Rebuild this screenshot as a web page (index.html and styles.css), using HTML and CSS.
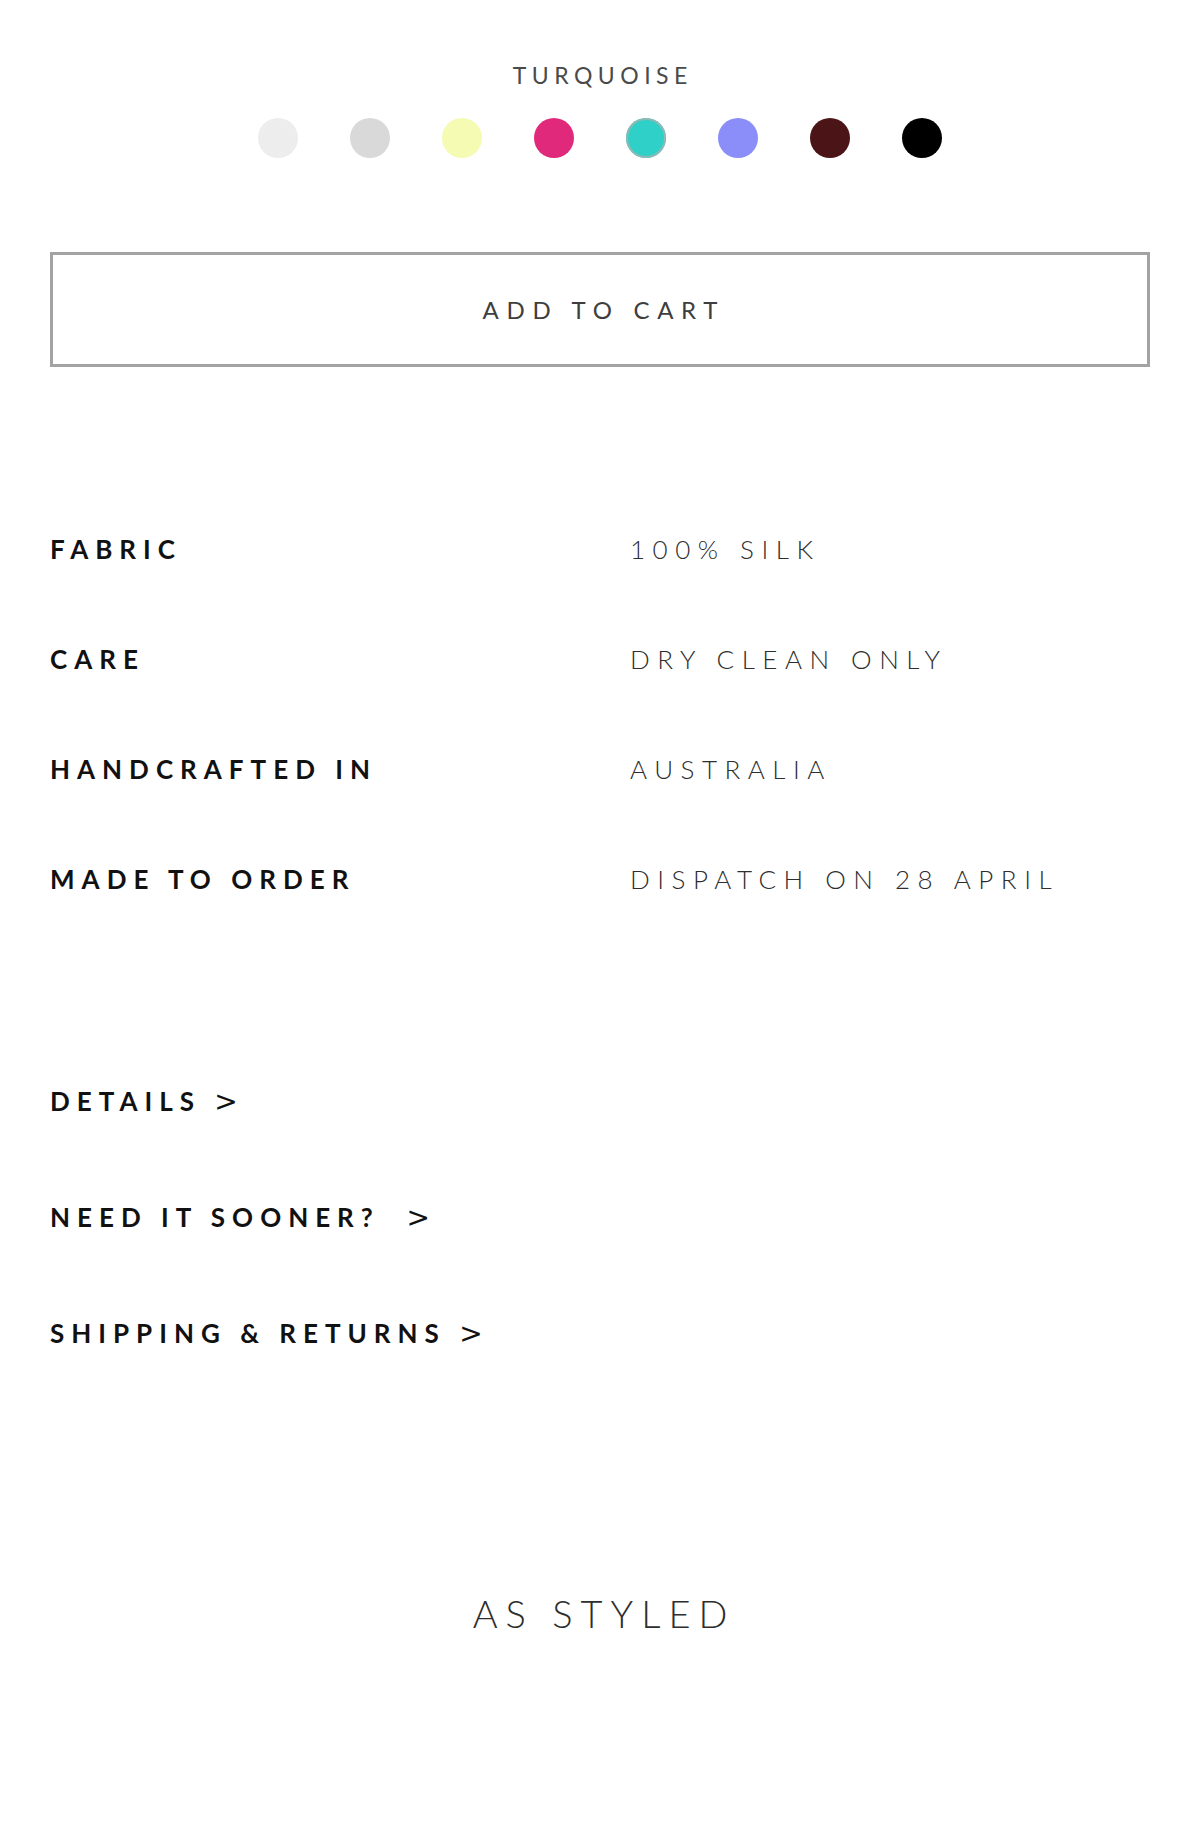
FILE: index.html
```html
<!DOCTYPE html>
<html lang="en">
<head>
<meta charset="utf-8">
<title>Product</title>
<link rel="stylesheet" href="styles.css">
</head>
<body>
<main class="product">
  <p class="color-name">TURQUOISE</p>
  <ul class="swatches">
    <li class="swatch swatch-white"></li>
    <li class="swatch swatch-grey"></li>
    <li class="swatch swatch-lemon"></li>
    <li class="swatch swatch-pink"></li>
    <li class="swatch swatch-turquoise is-selected"></li>
    <li class="swatch swatch-lilac"></li>
    <li class="swatch swatch-wine"></li>
    <li class="swatch swatch-black"></li>
  </ul>
  <button class="add-to-cart" type="button">ADD TO CART</button>

  <dl class="specs">
    <dt class="spec-label">FABRIC</dt><dd class="spec-value">100% SILK</dd>
    <dt class="spec-label">CARE</dt><dd class="spec-value">DRY CLEAN ONLY</dd>
    <dt class="spec-label">HANDCRAFTED IN</dt><dd class="spec-value">AUSTRALIA</dd>
    <dt class="spec-label">MADE TO ORDER</dt><dd class="spec-value">DISPATCH ON 28 APRIL</dd>
  </dl>

  <ul class="links">
    <li class="link">DETAILS <span class="arrow">&gt;</span></li>
    <li class="link">NEED IT SOONER?  <span class="arrow">&gt;</span></li>
    <li class="link">SHIPPING &amp; RETURNS <span class="arrow">&gt;</span></li>
  </ul>

  <h2 class="styled-title">AS STYLED</h2>
</main>
</body>
</html>
```

FILE: styles.css
```css
html, body {
  margin: 0;
  padding: 0;
  background: #ffffff;
}

body {
  font-family: "Lato", "Open Sans", "Liberation Sans", sans-serif;
  color: #111;
}

.product {
  padding: 60px 50px 196px;
}

.color-name {
  margin: 0;
  height: 30px;
  line-height: 30px;
  text-align: center;
  font-size: 23px;
  font-weight: 400;
  letter-spacing: 5.5px;
  padding-left: 5.5px;
  color: #4a4a4a;
}

.swatches {
  list-style: none;
  margin: 28px 0 0;
  padding: 0;
  display: flex;
  justify-content: center;
  gap: 52px;
}

.swatch {
  width: 40px;
  height: 40px;
  border-radius: 50%;
  box-sizing: border-box;
}

.swatch-white { background: #ededed; }
.swatch-grey { background: #d9d9d9; }
.swatch-lemon { background: #f5fbb3; }
.swatch-pink { background: #e1297b; }
.swatch-turquoise { background: #2fd0c7; }
.swatch-lilac { background: #8b8ef8; }
.swatch-wine { background: #4b1517; }
.swatch-black { background: #000; }

.swatch.is-selected {
  box-shadow: inset 0 0 0 2px #8fb9b6;
}

.add-to-cart {
  display: block;
  width: 100%;
  height: 115px;
  margin: 94px 0 0;
  box-sizing: border-box;
  border: 3px solid #a3a3a3;
  background: #fff;
  font-family: inherit;
  font-size: 24px;
  font-weight: 400;
  letter-spacing: 7.7px;
  padding: 0 0 0 7.7px;
  color: #3e3e3e;
}

.specs {
  margin: 127px 0 0;
  display: grid;
  grid-template-columns: 580px 1fr;
  grid-auto-rows: 110px;
  align-items: center;
}

.spec-label {
  font-size: 26px;
  font-weight: 700;
  letter-spacing: 7px;
  color: #111;
}

.spec-value {
  margin: 0;
  font-size: 26px;
  font-weight: 300;
  letter-spacing: 7.5px;
  color: #2e2e2e;
}

.links {
  list-style: none;
  margin: 109px 0 0;
  padding: 0;
}

.link {
  height: 116px;
  display: flex;
  align-items: center;
  white-space: pre;
  font-size: 26px;
  font-weight: 700;
  letter-spacing: 7px;
  color: #111;
}

.arrow {
  font-family: "DejaVu Sans", sans-serif;
  font-weight: 400;
  font-size: 28px;
  letter-spacing: 0;
}

.styled-title {
  margin: 192px 0 0;
  height: 60px;
  line-height: 60px;
  text-align: center;
  font-size: 38px;
  font-weight: 300;
  letter-spacing: 8px;
  padding-left: 8px;
  color: #2e2e2e;
}
```
